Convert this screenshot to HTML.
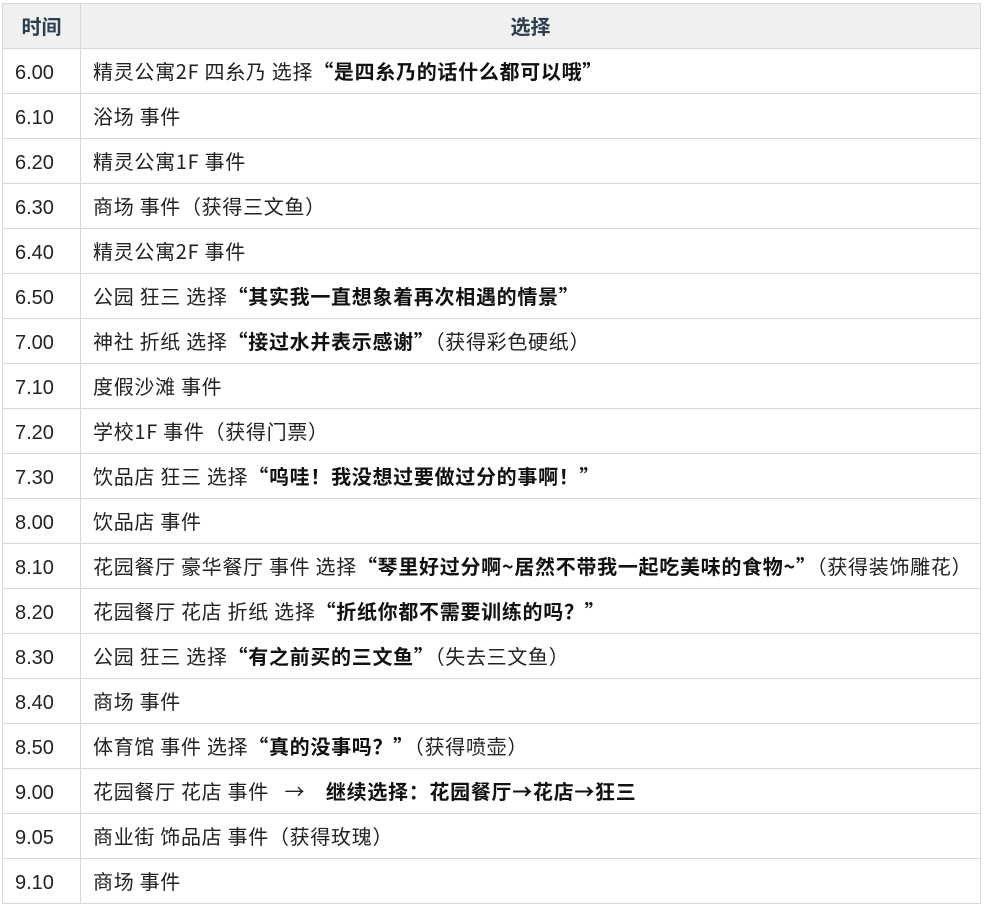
<!DOCTYPE html><html><head><meta charset="utf-8"><style>
body{margin:0;background:#fff;font-family:"Noto Sans CJK SC","Liberation Sans",sans-serif;color:#222;font-size:20px;letter-spacing:0.7px}
table{position:absolute;left:2px;top:3px;width:979px;border-collapse:collapse;table-layout:fixed}
td,th{border:1px solid #d8d8d8;height:45px;padding:0 0 0 12px;text-align:left;white-space:nowrap;box-sizing:border-box;vertical-align:middle;line-height:22px}
th{background:#f0f0f0;color:#2c3e50;font-weight:bold;text-align:center;padding:0;letter-spacing:0}
td:first-child{padding:3px 0 0 12px;font-family:"Liberation Sans",sans-serif;font-size:20px;letter-spacing:0}
b{font-weight:bold;color:#111}
</style></head><body>
<table>
<colgroup><col style="width:78px"><col></colgroup>
<tr><th>时间</th><th>选择</th></tr>
<tr><td>6.00</td><td>精灵公寓2F 四糸乃 选择<b>“是四糸乃的话什么都可以哦”</b></td></tr>
<tr><td>6.10</td><td>浴场 事件</td></tr>
<tr><td>6.20</td><td>精灵公寓1F 事件</td></tr>
<tr><td>6.30</td><td>商场 事件（获得三文鱼）</td></tr>
<tr><td>6.40</td><td>精灵公寓2F 事件</td></tr>
<tr><td>6.50</td><td>公园 狂三 选择<b>“其实我一直想象着再次相遇的情景”</b></td></tr>
<tr><td>7.00</td><td>神社 折纸 选择<b>“接过水并表示感谢”</b>（获得彩色硬纸）</td></tr>
<tr><td>7.10</td><td>度假沙滩 事件</td></tr>
<tr><td>7.20</td><td>学校1F 事件（获得门票）</td></tr>
<tr><td>7.30</td><td>饮品店 狂三 选择<b>“呜哇！我没想过要做过分的事啊！”</b></td></tr>
<tr><td>8.00</td><td>饮品店 事件</td></tr>
<tr><td>8.10</td><td>花园餐厅 豪华餐厅 事件 选择<b>“琴里好过分啊~居然不带我一起吃美味的食物~”</b>（获得装饰雕花）</td></tr>
<tr><td>8.20</td><td>花园餐厅 花店 折纸 选择<b>“折纸你都不需要训练的吗？”</b></td></tr>
<tr><td>8.30</td><td>公园 狂三 选择<b>“有之前买的三文鱼”</b>（失去三文鱼）</td></tr>
<tr><td>8.40</td><td>商场 事件</td></tr>
<tr><td>8.50</td><td>体育馆 事件 选择<b>“真的没事吗？”</b>（获得喷壶）</td></tr>
<tr><td>9.00</td><td>花园餐厅 花店 事件 &nbsp; → &nbsp;&nbsp; <b>继续选择：花园餐厅→花店→狂三</b></td></tr>
<tr><td>9.05</td><td>商业街 饰品店 事件（获得玫瑰）</td></tr>
<tr><td>9.10</td><td>商场 事件</td></tr>
</table>
</body></html>
